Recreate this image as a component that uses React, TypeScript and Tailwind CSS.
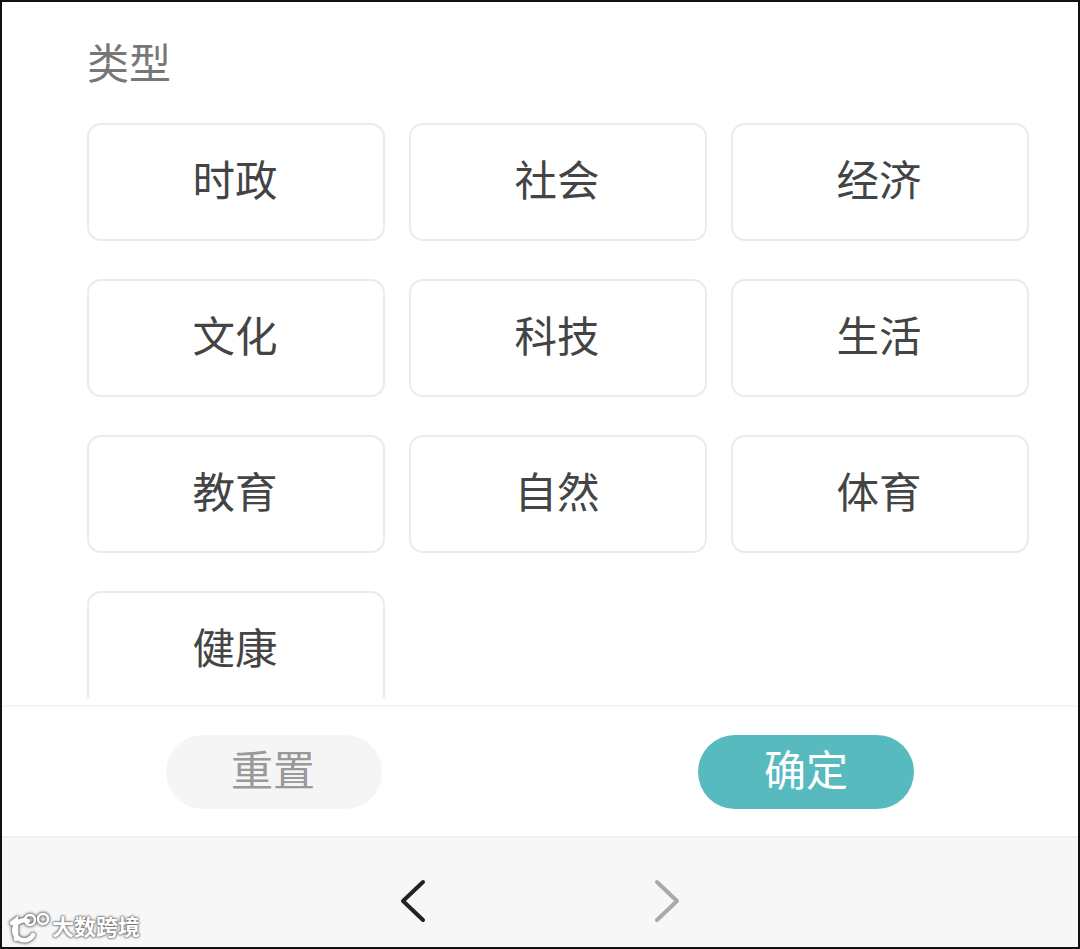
const types = ["时政", "社会", "经济", "文化", "科技", "生活", "教育", "自然", "体育", "健康"];

export default function App() {
  return (
    <div
      className="relative flex h-[949px] w-[1080px] flex-col overflow-hidden border-2 border-[#111111] bg-white"
      style={{ fontFamily: '"Noto Sans CJK SC", "Noto Sans", sans-serif' }}
    >
      <div className="h-[696px] shrink-0 overflow-hidden pl-[85px] pr-[49px]">
        <h2 className="mb-[33px] mt-[30px] text-[42px] font-normal leading-[58px] text-[#777777]">类型</h2>
        <div className="grid grid-cols-3 gap-x-[24px] gap-y-[38px]">
          {types.map((t) => (
            <div
              key={t}
              className="flex h-[118px] items-center justify-center rounded-[14px] border-2 border-[#ebebeb] bg-white pb-[7px] pr-[2px] text-[42.5px] leading-none text-[#444444]"
            >
              {t}
            </div>
          ))}
        </div>
      </div>

      <div className="mt-[7px] flex h-[131px] shrink-0 items-center justify-between border-t-2 border-[#f4f4f4] px-[164px]">
        <button className="h-[74px] w-[216px] rounded-full bg-[#f5f5f5] pb-[7px] pr-[2px] text-[42px] leading-none text-[#999999]">重置</button>
        <button className="h-[74px] w-[216px] rounded-full bg-[#56babf] pb-[7px] text-[42px] leading-none text-white">确定</button>
      </div>

      <div className="flex flex-1 items-center justify-center gap-[208px] border-t-2 border-[#efefef] bg-[#f7f7f7] pt-[16px]">
        <svg width="46" height="46" viewBox="0 0 46 46" fill="none" stroke="#222222" strokeWidth="4" strokeLinecap="round" strokeLinejoin="round">
          <path d="M33 4 13 23l20 19" />
        </svg>
        <svg width="46" height="46" viewBox="0 0 46 46" fill="none" stroke="#aaaaaa" strokeWidth="4" strokeLinecap="round" strokeLinejoin="round">
          <path d="M13 4l20 19-20 19" />
        </svg>
      </div>

      {/* watermark */}
      <div className="absolute bottom-[3px] left-[7px] flex items-center gap-[1px] text-white">
        <svg width="42" height="32" viewBox="0 0 42 32" fill="none" stroke="#ffffff" strokeLinecap="round" style={{ filter: "drop-shadow(0 0 1.5px #555555) drop-shadow(0 0 1px #888888)" }}>
          <path d="M3 12l4-3v19" strokeWidth="4.5" />
          <path d="M19 10a10 10 0 1 0 5 14" strokeWidth="4.5" />
          <circle cx="21" cy="9" r="5" strokeWidth="2.5" />
          <circle cx="34" cy="8" r="5" strokeWidth="2.5" />
        </svg>
        <span
          className="mb-[4px] text-[22px] font-bold leading-[30px]"
          style={{ textShadow: "0 0 2px #666666, 0 0 2px #666666, 0 0 3px #888888" }}
        >
          大数跨境
        </span>
      </div>
    </div>
  );
}
